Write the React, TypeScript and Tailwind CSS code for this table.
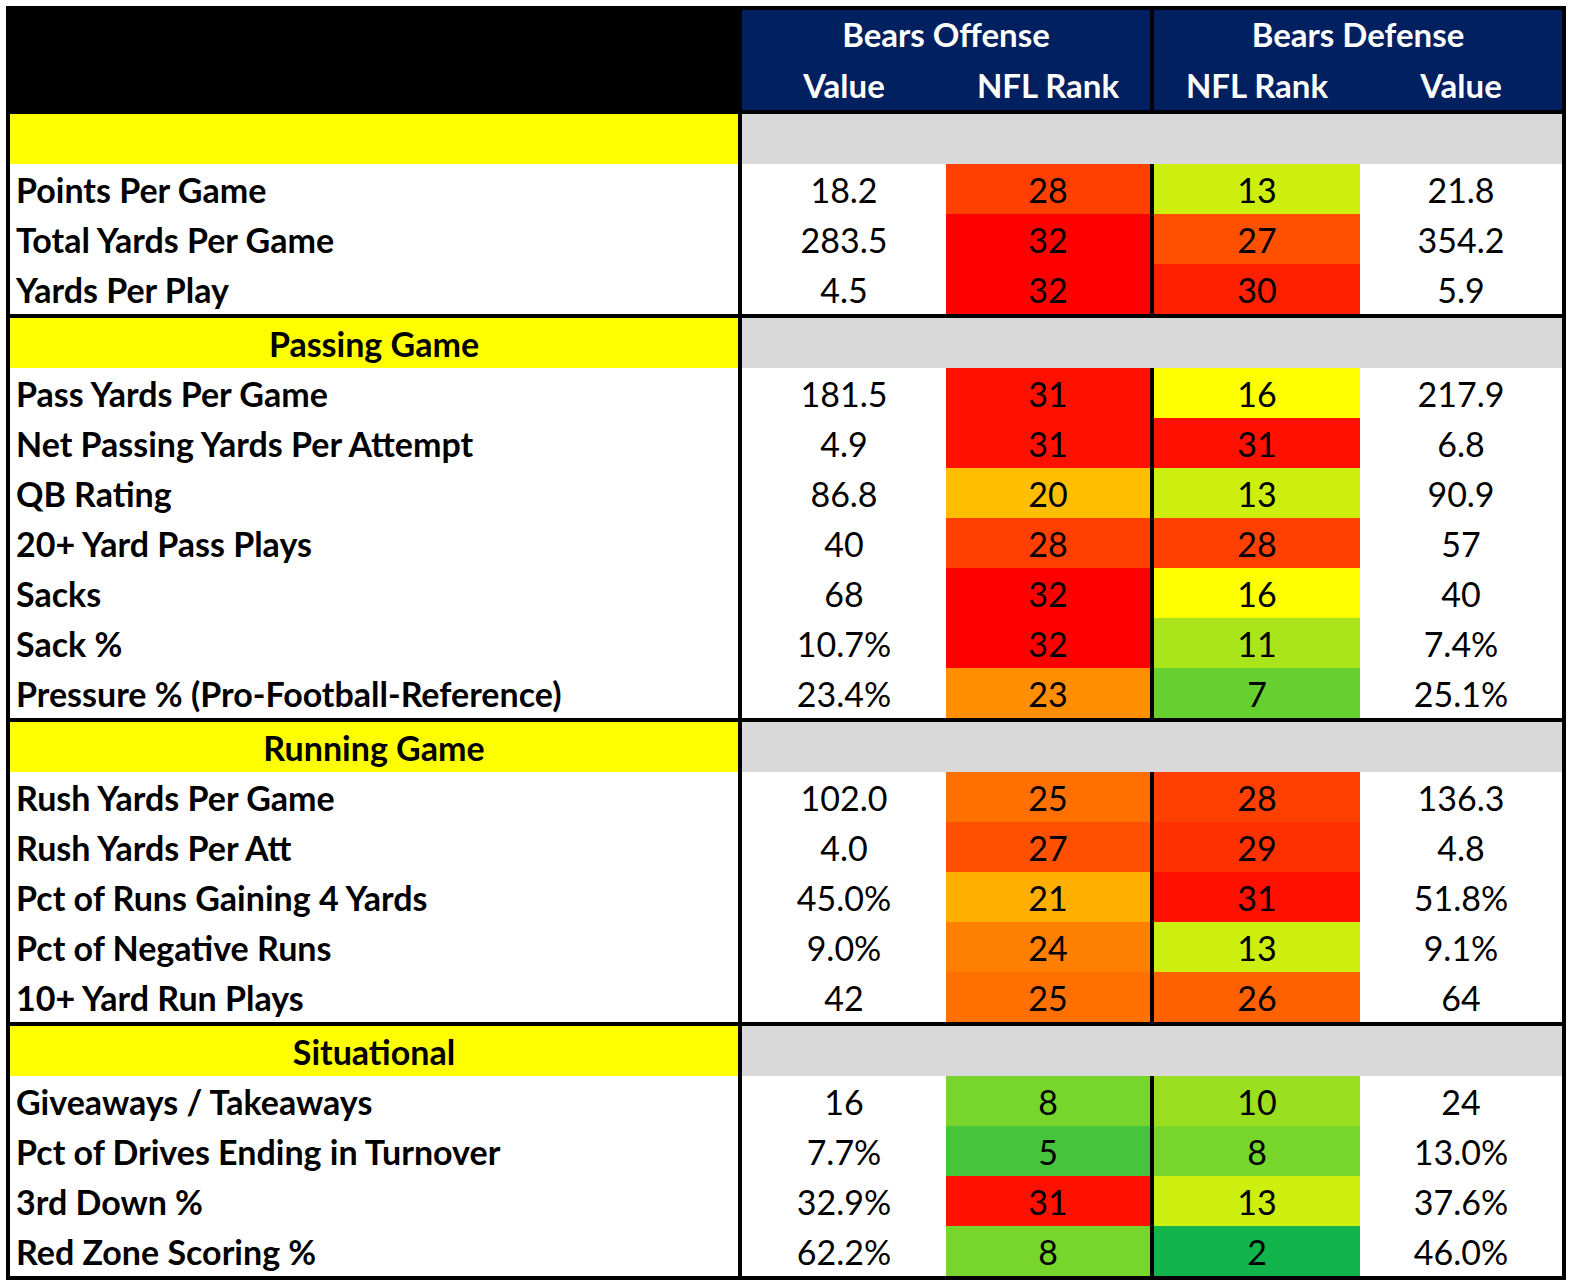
type Stat = {
  label: string;
  offValue: string;
  offRank: number;
  defRank: number;
  defValue: string;
};

type Section = {
  title: string;
  rows: Stat[];
};

const sections: Section[] = [
  {
    title: '',
    rows: [
      { label: 'Points Per Game', offValue: '18.2', offRank: 28, defRank: 13, defValue: '21.8' },
      { label: 'Total Yards Per Game', offValue: '283.5', offRank: 32, defRank: 27, defValue: '354.2' },
      { label: 'Yards Per Play', offValue: '4.5', offRank: 32, defRank: 30, defValue: '5.9' },
    ],
  },
  {
    title: 'Passing Game',
    rows: [
      { label: 'Pass Yards Per Game', offValue: '181.5', offRank: 31, defRank: 16, defValue: '217.9' },
      { label: 'Net Passing Yards Per Attempt', offValue: '4.9', offRank: 31, defRank: 31, defValue: '6.8' },
      { label: 'QB Rating', offValue: '86.8', offRank: 20, defRank: 13, defValue: '90.9' },
      { label: '20+ Yard Pass Plays', offValue: '40', offRank: 28, defRank: 28, defValue: '57' },
      { label: 'Sacks', offValue: '68', offRank: 32, defRank: 16, defValue: '40' },
      { label: 'Sack %', offValue: '10.7%', offRank: 32, defRank: 11, defValue: '7.4%' },
      { label: 'Pressure % (Pro-Football-Reference)', offValue: '23.4%', offRank: 23, defRank: 7, defValue: '25.1%' },
    ],
  },
  {
    title: 'Running Game',
    rows: [
      { label: 'Rush Yards Per Game', offValue: '102.0', offRank: 25, defRank: 28, defValue: '136.3' },
      { label: 'Rush Yards Per Att', offValue: '4.0', offRank: 27, defRank: 29, defValue: '4.8' },
      { label: 'Pct of Runs Gaining 4 Yards', offValue: '45.0%', offRank: 21, defRank: 31, defValue: '51.8%' },
      { label: 'Pct of Negative Runs', offValue: '9.0%', offRank: 24, defRank: 13, defValue: '9.1%' },
      { label: '10+ Yard Run Plays', offValue: '42', offRank: 25, defRank: 26, defValue: '64' },
    ],
  },
  {
    title: 'Situational',
    rows: [
      { label: 'Giveaways / Takeaways', offValue: '16', offRank: 8, defRank: 10, defValue: '24' },
      { label: 'Pct of Drives Ending in Turnover', offValue: '7.7%', offRank: 5, defRank: 8, defValue: '13.0%' },
      { label: '3rd Down %', offValue: '32.9%', offRank: 31, defRank: 13, defValue: '37.6%' },
      { label: 'Red Zone Scoring %', offValue: '62.2%', offRank: 8, defRank: 2, defValue: '46.0%' },
    ],
  },
];

// 3-colour scale: 1 = green, 16 = yellow, 32 = red
function rankColor(rank: number) {
  const lerp = (a: number, b: number, t: number) => Math.round(a + (b - a) * t);
  if (rank <= 16) {
    const t = (rank - 1) / 15;
    return `rgb(${lerp(0, 255, t)}, ${lerp(176, 255, t)}, ${lerp(80, 0, t)})`;
  }
  const t = (rank - 16) / 16;
  return `rgb(255, ${lerp(255, 0, t)}, 0)`;
}

function StatRow({ stat }: { stat: Stat }) {
  return (
    <div className="flex h-[50px] text-[34px] text-black">
      <div className="w-[732px] border-r-4 border-black pl-[6px] flex items-center font-bold">
        {stat.label}
      </div>
      <div className="w-[204px] flex items-center justify-center">{stat.offValue}</div>
      <div
        className="w-[204px] flex items-center justify-center"
        style={{ backgroundColor: rankColor(stat.offRank) }}
      >
        {stat.offRank}
      </div>
      <div className="w-[4px] bg-black" />
      <div
        className="w-[206px] flex items-center justify-center"
        style={{ backgroundColor: rankColor(stat.defRank) }}
      >
        {stat.defRank}
      </div>
      <div className="w-[202px] flex items-center justify-center">{stat.defValue}</div>
    </div>
  );
}

function SectionBlock({ section }: { section: Section }) {
  return (
    <div>
      <div className="flex h-[50px]">
        <div className="w-[732px] border-r-4 border-black bg-[#ffff00] flex items-center justify-center text-[34px] font-bold text-black">
          {section.title}
        </div>
        <div className="flex-1 bg-[#d9d9d9]" />
      </div>
      {section.rows.map((stat) => (
        <StatRow key={stat.label} stat={stat} />
      ))}
    </div>
  );
}

export default function App() {
  return (
    <div className="min-h-screen bg-white pt-[6px] pl-[6px]">
      <div
        className="w-[1560px] border-4 border-black bg-white"
        style={{ fontFamily: 'Lato, "Open Sans", sans-serif' }}
      >
        <div className="flex h-[100px] bg-black text-white font-bold text-[33px]">
          <div className="w-[732px]" />
          <div className="w-[408px] bg-[#002060] flex flex-col">
            <div className="h-[50px] flex items-center justify-center">Bears Offense</div>
            <div className="h-[50px] pt-[2px] flex">
              <div className="w-[204px] flex items-center justify-center">Value</div>
              <div className="w-[204px] flex items-center justify-center">NFL Rank</div>
            </div>
          </div>
          <div className="w-[4px]" />
          <div className="w-[408px] bg-[#002060] flex flex-col">
            <div className="h-[50px] flex items-center justify-center">Bears Defense</div>
            <div className="h-[50px] pt-[2px] flex">
              <div className="w-[206px] flex items-center justify-center">NFL Rank</div>
              <div className="w-[202px] flex items-center justify-center">Value</div>
            </div>
          </div>
        </div>
        <div className="h-[4px] bg-black" />
        {sections.map((section, i) => (
          <div key={i}>
            {i > 0 && <div className="h-[4px] bg-black" />}
            <SectionBlock section={section} />
          </div>
        ))}
      </div>
    </div>
  );
}
